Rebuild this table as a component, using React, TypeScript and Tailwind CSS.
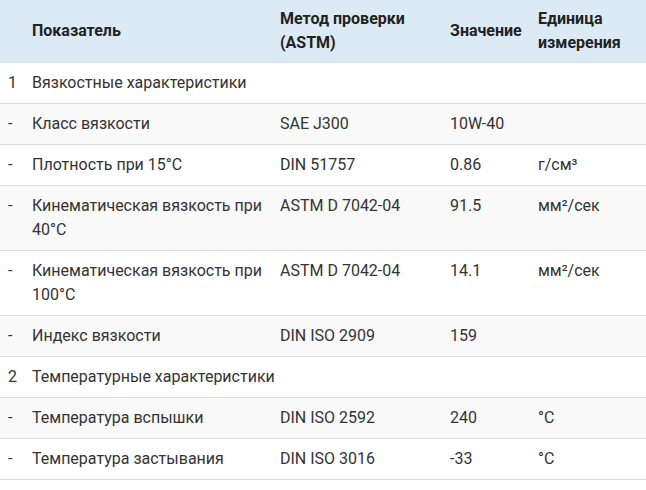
const rows: [string, string, string, string, string][] = [
  ['1', 'Вязкостные характеристики', '', '', ''],
  ['-', 'Класс вязкости', 'SAE J300', '10W-40', ''],
  ['-', 'Плотность при 15°C', 'DIN 51757', '0.86', 'г/см³'],
  ['-', 'Кинематическая вязкость при 40°C', 'ASTM D 7042-04', '91.5', 'мм²/сек'],
  ['-', 'Кинематическая вязкость при 100°C', 'ASTM D 7042-04', '14.1', 'мм²/сек'],
  ['-', 'Индекс вязкости', 'DIN ISO 2909', '159', ''],
  ['2', 'Температурные характеристики', '', '', ''],
  ['-', 'Температура вспышки', 'DIN ISO 2592', '240', '°C'],
  ['-', 'Температура застывания', 'DIN ISO 3016', '-33', '°C'],
];

export default function App() {
  return (
    <div className="w-[646px] h-[490px] bg-white font-['Roboto',sans-serif] text-[16px] leading-6 text-[#333]">
      <table className="w-full table-fixed border-collapse">
        <colgroup>
          <col className="w-[24px]" />
          <col className="w-[248px]" />
          <col className="w-[170px]" />
          <col className="w-[88px]" />
          <col />
        </colgroup>
        <thead>
          <tr className="bg-[#dbeaf5] text-[#222] font-bold align-middle text-left">
            <th className="px-2 py-[7px] border-b border-[#dbe3ea]"></th>
            <th className="px-2 py-[7px] border-b border-[#dbe3ea]">Показатель</th>
            <th className="px-2 py-[7px] border-b border-[#dbe3ea]">Метод проверки (ASTM)</th>
            <th className="px-2 py-[7px] border-b border-[#dbe3ea]">Значение</th>
            <th className="px-2 py-[7px] border-b border-[#dbe3ea]">Единица измерения</th>
          </tr>
        </thead>
        <tbody>
          {rows.map((r, i) => (
            <tr
              key={i}
              className={`align-top border-b border-[#dddddd] ${i % 2 === 1 ? 'bg-[#f9f9f9]' : 'bg-white'}`}
            >
              {r.map((c, j) => (
                <td key={j} className={`px-2 py-2 ${r[2] === '' && j === 1 ? 'whitespace-nowrap' : ''}`}>
                  {c}
                </td>
              ))}
            </tr>
          ))}
        </tbody>
      </table>
    </div>
  );
}
